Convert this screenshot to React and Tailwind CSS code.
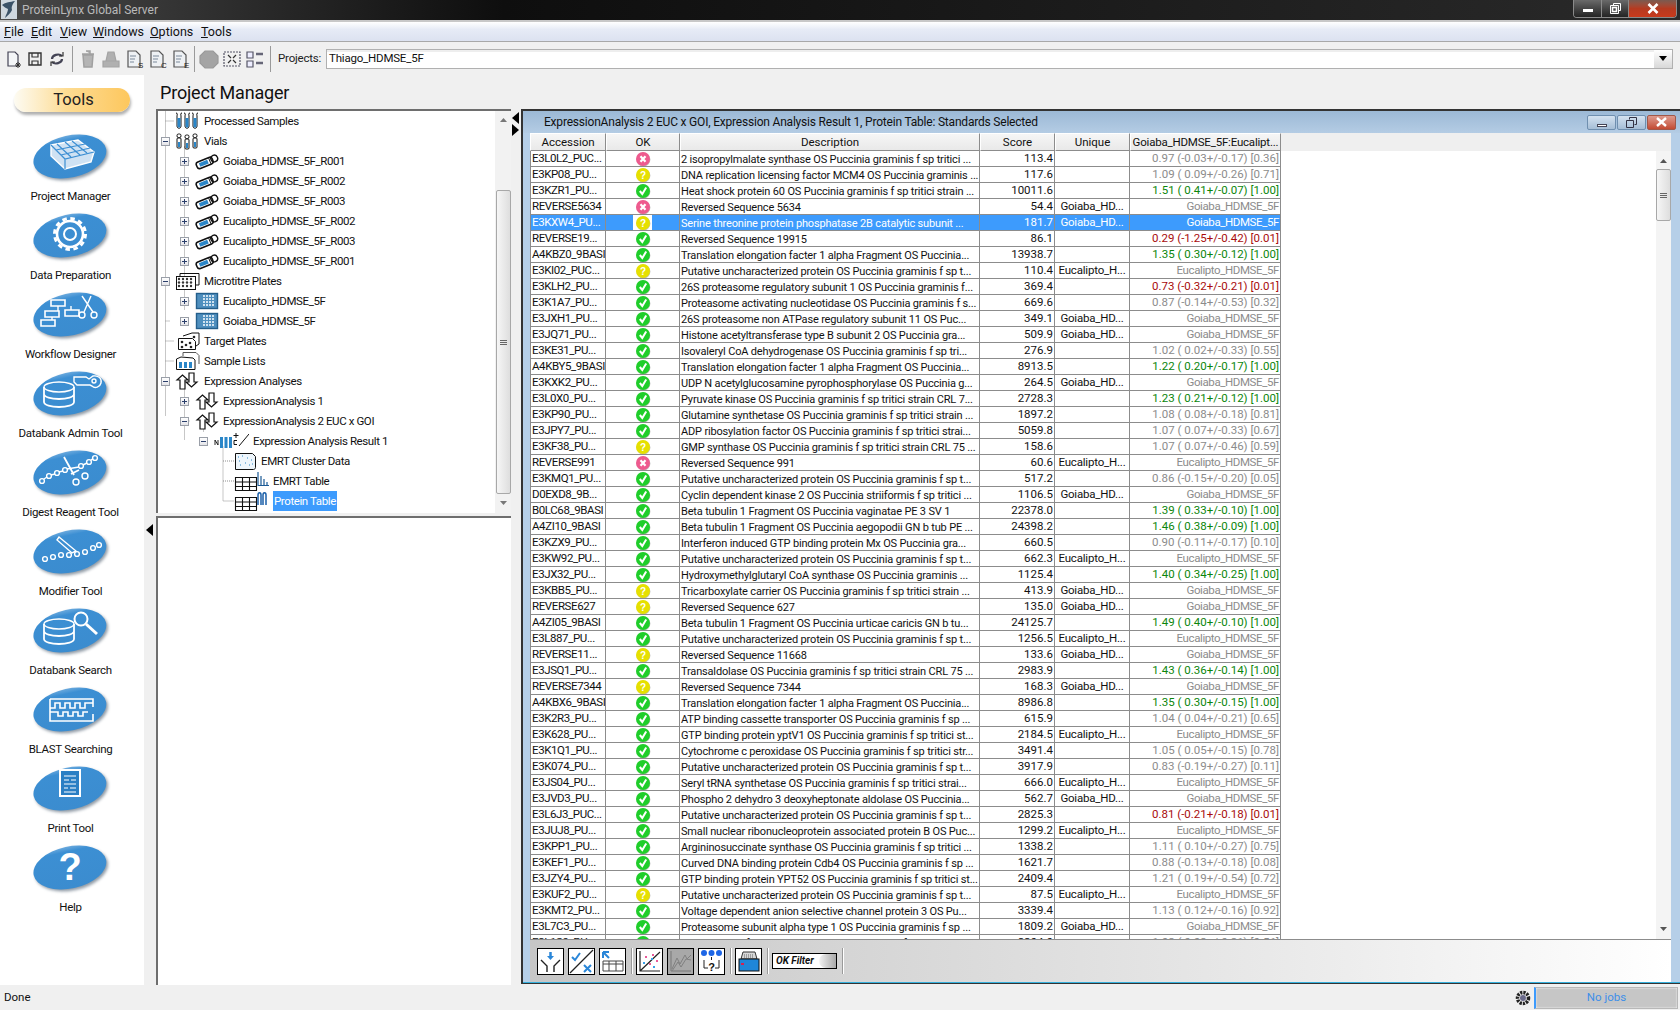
import React from "react";

const ROWS = [
  ["E3L0L2_PUC...", "x", "2 isopropylmalate synthase OS Puccinia graminis f sp tritici ...", "113.4", "", "0.97 (-0.03+/-0.17) [0.36]", "g"],
  ["E3KP08_PU...", "q", "DNA replication licensing factor MCM4 OS Puccinia graminis ...", "117.6", "", "1.09 ( 0.09+/-0.26) [0.71]", "g"],
  ["E3KZR1_PU...", "c", "Heat shock protein 60 OS Puccinia graminis f sp tritici strain ...", "10011.6", "", "1.51 ( 0.41+/-0.07) [1.00]", "v"],
  ["REVERSE5634", "x", "Reversed Sequence 5634", "54.4", "Goiaba_HD...", "Goiaba_HDMSE_5F", "g"],
  ["E3KXW4_PU...", "q", "Serine threonine protein phosphatase 2B catalytic subunit ...", "181.7", "Goiaba_HD...", "Goiaba_HDMSE_5F", "s"],
  ["REVERSE19...", "c", "Reversed Sequence 19915", "86.1", "", "0.29 (-1.25+/-0.42) [0.01]", "r"],
  ["A4KBZ0_9BASI", "c", "Translation elongation facter 1 alpha Fragment OS Puccinia...", "13938.7", "", "1.35 ( 0.30+/-0.12) [1.00]", "v"],
  ["E3KI02_PUC...", "q", "Putative uncharacterized protein OS Puccinia graminis f sp t...", "110.4", "Eucalipto_H...", "Eucalipto_HDMSE_5F", "g"],
  ["E3KLH2_PU...", "c", "26S proteasome regulatory subunit 1 OS Puccinia graminis f...", "369.4", "", "0.73 (-0.32+/-0.21) [0.01]", "r"],
  ["E3K1A7_PU...", "c", "Proteasome activating nucleotidase OS Puccinia graminis f s...", "669.6", "", "0.87 (-0.14+/-0.53) [0.32]", "g"],
  ["E3JXH1_PU...", "c", "26S proteasome non ATPase regulatory subunit 11 OS Puc...", "349.1", "Goiaba_HD...", "Goiaba_HDMSE_5F", "g"],
  ["E3JQ71_PU...", "c", "Histone acetyltransferase type B subunit 2 OS Puccinia gra...", "509.9", "Goiaba_HD...", "Goiaba_HDMSE_5F", "g"],
  ["E3KE31_PU...", "c", "Isovaleryl CoA dehydrogenase OS Puccinia graminis f sp tri...", "276.9", "", "1.02 ( 0.02+/-0.33) [0.55]", "g"],
  ["A4KBY5_9BASI", "c", "Translation elongation facter 1 alpha Fragment OS Puccinia...", "8913.5", "", "1.22 ( 0.20+/-0.17) [1.00]", "v"],
  ["E3KXK2_PU...", "c", "UDP N acetylglucosamine pyrophosphorylase OS Puccinia g...", "264.5", "Goiaba_HD...", "Goiaba_HDMSE_5F", "g"],
  ["E3L0X0_PU...", "c", "Pyruvate kinase OS Puccinia graminis f sp tritici strain CRL 7...", "2728.3", "", "1.23 ( 0.21+/-0.12) [1.00]", "v"],
  ["E3KP90_PU...", "c", "Glutamine synthetase OS Puccinia graminis f sp tritici strain ...", "1897.2", "", "1.08 ( 0.08+/-0.18) [0.81]", "g"],
  ["E3JPY7_PU...", "c", "ADP ribosylation factor OS Puccinia graminis f sp tritici strai...", "5059.8", "", "1.07 ( 0.07+/-0.33) [0.67]", "g"],
  ["E3KF38_PU...", "q", "GMP synthase OS Puccinia graminis f sp tritici strain CRL 75 ...", "158.6", "", "1.07 ( 0.07+/-0.46) [0.59]", "g"],
  ["REVERSE991", "x", "Reversed Sequence 991", "60.6", "Eucalipto_H...", "Eucalipto_HDMSE_5F", "g"],
  ["E3KMQ1_PU...", "c", "Putative uncharacterized protein OS Puccinia graminis f sp t...", "517.2", "", "0.86 (-0.15+/-0.20) [0.05]", "g"],
  ["D0EXD8_9B...", "c", "Cyclin dependent kinase 2 OS Puccinia striiformis f sp tritici ...", "1106.5", "Goiaba_HD...", "Goiaba_HDMSE_5F", "g"],
  ["B0LC68_9BASI", "c", "Beta tubulin 1 Fragment OS Puccinia vaginatae PE 3 SV 1", "22378.0", "", "1.39 ( 0.33+/-0.10) [1.00]", "v"],
  ["A4ZI10_9BASI", "c", "Beta tubulin 1 Fragment OS Puccinia aegopodii GN b tub PE ...", "24398.2", "", "1.46 ( 0.38+/-0.09) [1.00]", "v"],
  ["E3KZX9_PU...", "c", "Interferon induced GTP binding protein Mx OS Puccinia gra...", "660.5", "", "0.90 (-0.11+/-0.17) [0.10]", "g"],
  ["E3KW92_PU...", "c", "Putative uncharacterized protein OS Puccinia graminis f sp t...", "662.3", "Eucalipto_H...", "Eucalipto_HDMSE_5F", "g"],
  ["E3JX32_PU...", "c", "Hydroxymethylglutaryl CoA synthase OS Puccinia graminis ...", "1125.4", "", "1.40 ( 0.34+/-0.25) [1.00]", "v"],
  ["E3KBB5_PU...", "q", "Tricarboxylate carrier OS Puccinia graminis f sp tritici strain ...", "413.9", "Goiaba_HD...", "Goiaba_HDMSE_5F", "g"],
  ["REVERSE627", "q", "Reversed Sequence 627", "135.0", "Goiaba_HD...", "Goiaba_HDMSE_5F", "g"],
  ["A4ZI05_9BASI", "c", "Beta tubulin 1 Fragment OS Puccinia urticae caricis GN b tu...", "24125.7", "", "1.49 ( 0.40+/-0.10) [1.00]", "v"],
  ["E3L887_PU...", "c", "Putative uncharacterized protein OS Puccinia graminis f sp t...", "1256.5", "Eucalipto_H...", "Eucalipto_HDMSE_5F", "g"],
  ["REVERSE11...", "q", "Reversed Sequence 11668", "133.6", "Goiaba_HD...", "Goiaba_HDMSE_5F", "g"],
  ["E3JSQ1_PU...", "c", "Transaldolase OS Puccinia graminis f sp tritici strain CRL 75 ...", "2983.9", "", "1.43 ( 0.36+/-0.14) [1.00]", "v"],
  ["REVERSE7344", "q", "Reversed Sequence 7344", "168.3", "Goiaba_HD...", "Goiaba_HDMSE_5F", "g"],
  ["A4KBX6_9BASI", "c", "Translation elongation facter 1 alpha Fragment OS Puccinia...", "8986.8", "", "1.35 ( 0.30+/-0.15) [1.00]", "v"],
  ["E3K2R3_PU...", "c", "ATP binding cassette transporter OS Puccinia graminis f sp ...", "615.9", "", "1.04 ( 0.04+/-0.21) [0.65]", "g"],
  ["E3K628_PU...", "c", "GTP binding protein yptV1 OS Puccinia graminis f sp tritici st...", "2184.5", "Eucalipto_H...", "Eucalipto_HDMSE_5F", "g"],
  ["E3K1Q1_PU...", "c", "Cytochrome c peroxidase OS Puccinia graminis f sp tritici str...", "3491.4", "", "1.05 ( 0.05+/-0.15) [0.78]", "g"],
  ["E3K074_PU...", "c", "Putative uncharacterized protein OS Puccinia graminis f sp t...", "3917.9", "", "0.83 (-0.19+/-0.27) [0.11]", "g"],
  ["E3JS04_PU...", "c", "Seryl tRNA synthetase OS Puccinia graminis f sp tritici strai...", "666.0", "Eucalipto_H...", "Eucalipto_HDMSE_5F", "g"],
  ["E3JVD3_PU...", "c", "Phospho 2 dehydro 3 deoxyheptonate aldolase OS Puccinia...", "562.7", "Goiaba_HD...", "Goiaba_HDMSE_5F", "g"],
  ["E3L6J3_PUC...", "c", "Putative uncharacterized protein OS Puccinia graminis f sp t...", "2825.3", "", "0.81 (-0.21+/-0.18) [0.01]", "r"],
  ["E3JUJ8_PU...", "c", "Small nuclear ribonucleoprotein associated protein B OS Puc...", "1299.2", "Eucalipto_H...", "Eucalipto_HDMSE_5F", "g"],
  ["E3KPP1_PU...", "c", "Argininosuccinate synthase OS Puccinia graminis f sp tritici ...", "1338.2", "", "1.11 ( 0.10+/-0.27) [0.75]", "g"],
  ["E3KEF1_PU...", "c", "Curved DNA binding protein Cdb4 OS Puccinia graminis f sp ...", "1621.7", "", "0.88 (-0.13+/-0.18) [0.08]", "g"],
  ["E3JZY4_PU...", "c", "GTP binding protein YPT52 OS Puccinia graminis f sp tritici st...", "2409.4", "", "1.21 ( 0.19+/-0.54) [0.72]", "g"],
  ["E3KUF2_PU...", "q", "Putative uncharacterized protein OS Puccinia graminis f sp t...", "87.5", "Eucalipto_H...", "Eucalipto_HDMSE_5F", "g"],
  ["E3KMT2_PU...", "c", "Voltage dependent anion selective channel protein 3 OS Pu...", "3339.4", "", "1.13 ( 0.12+/-0.16) [0.92]", "g"],
  ["E3L7C3_PU...", "c", "Proteasome subunit alpha type 1 OS Puccinia graminis f sp ...", "1809.2", "Goiaba_HD...", "Goiaba_HDMSE_5F", "g"],
  ["E3L1S9_PU...", "c", "Glucosamine fructose 6 phosphate aminotransferase 3 OS ...", "2204.0", "", "1.02 ( 0.03+/-0.31) [0.56]", "g"],
];

const RATIO_COLOR = { g: "text-[#8c8c8c]", v: "text-[#0b860b]", r: "text-[#a80c0c]", s: "text-white" };

// ---- small status dots in the OK column
const StatusDot = ({ kind }) => {
  const fill = { x: "#ee5a8e", q: "#e6e000", c: "#1fce2a" }[kind];
  return (
    <svg width="16" height="16" viewBox="0 0 16 16">
      <circle cx="8.4" cy="8.6" r="7" fill="#9a9a9a" opacity="0.6" />
      <circle cx="8" cy="8" r="7" fill={fill} />
      {kind === "x" && <path d="M5.5 5.2 10.5 10.8M10.5 5.2 5.5 10.8" stroke="#fff" strokeWidth="2.2" />}
      {kind === "c" && <path d="M4.8 8 7.3 11 11.2 4.6" stroke="#fff" strokeWidth="2" fill="none" />}
      {kind === "q" && (
        <text x="8" y="11.5" textAnchor="middle" fontSize="10" fontWeight="700" fill="#fff" fontFamily="Liberation Sans, sans-serif">?</text>
      )}
    </svg>
  );
};

// ---- sidebar tool icons, white line art on a tilted blue oval
const Oval = ({ children }) => (
  <svg width="80" height="52" viewBox="0 0 80 52" className="ml-[33px]">
    <defs>
      <filter id="ovalBlur"><feGaussianBlur stdDeviation="1.4" /></filter>
      <linearGradient id="ovalFill" x1="0" y1="0" x2="0" y2="1">
        <stop offset="0" stopColor="#6aa9dd" />
        <stop offset="0.12" stopColor="#3c8fd3" />
        <stop offset="1" stopColor="#3b8ccf" />
      </linearGradient>
    </defs>
    <ellipse cx="38.5" cy="25.5" rx="37" ry="21" transform="rotate(-12 38 25)" fill="#8f9aa5" filter="url(#ovalBlur)" />
    <ellipse cx="37" cy="23.5" rx="37" ry="21" transform="rotate(-12 37 24)" fill="url(#ovalFill)" />
    <g fill="none" stroke="#fff" strokeWidth="1.4">{children}</g>
  </svg>
);

const Chain = ({ pts }) => (
  <>
    {pts.map(([x, y], i) => (
      <circle key={i} cx={x} cy={y} r="2.4" />
    ))}
  </>
);

const Cylinder = () => (
  <>
    <ellipse cx="26" cy="17" rx="15" ry="5" />
    <path d="M11 17v15c0 3 7 5 15 5s15-2 15-5V17M11 24c0 3 7 5 15 5s15-2 15-5" strokeWidth="1.8" />
  </>
);

const Scissors = ({ x = 0, y = 0 }) => (
  <g transform={`translate(${x} ${y})`}>
    <path d="M0 0 11 16M9 0 2 16" />
    <circle cx="0" cy="19" r="3" />
    <circle cx="12" cy="19" r="3" />
  </g>
);

const TOOLS = [
  ["Project Manager", (
    <>
      <path d="M18 12 45 7 61 19 58 29 32 36 18 23Z" fill="#cfe2f3" />
      <path d="M18 12 32 26 61 19M32 26v10M24 11l14 13M32 9l15 13M39 8l15 12M23 17l29-6M28 22l29-7" stroke="#3c8fd3" strokeWidth="1.2" />
    </>
  )],
  ["Data Preparation", (
    <>
      <circle cx="37" cy="22" r="6" strokeWidth="2" />
      <circle cx="37" cy="22" r="13" strokeWidth="2.6" />
      <circle cx="37" cy="22" r="15.5" strokeWidth="3" strokeDasharray="4.5 3.6" />
    </>
  )],
  ["Workflow Designer", (
    <>
      <path d="M18 9h14v6H18ZM12 20h14v6H12ZM32 19h14v6H32ZM8 29h14v6H8Z" strokeWidth="1.6" />
      <path d="M25 15v5M19 26v3M38 15v4" />
      <Scissors x={49} y={5} />
    </>
  )],
  ["Databank Admin Tool", (
    <>
      <Cylinder />
      <path d="M41 7h12l3 2 4-3c6-1 9 3 8 7-1 4-6 6-9 3l-2-1H44l-3-3Z" />
      <circle cx="61" cy="11" r="2" />
    </>
  )],
  ["Digest Reagent Tool", (
    <>
      <Chain pts={[[9, 32], [16, 27], [24, 24], [32, 21], [48, 17], [56, 13], [62, 9]]} />
      <path d="M11 30 14 28M18 26l4-1M26 23l4-1M50 16l4-2M58 11l2-1M34 20l12-2" />
      <path d="M31 8 41 26M46 21 38 25" strokeWidth="1.8" />
      <circle cx="43" cy="33" r="3" />
      <circle cx="52" cy="27" r="3" />
    </>
  )],
  ["Modifier Tool", (
    <>
      <Chain pts={[[12, 31], [20, 29], [28, 27], [36, 27], [44, 26], [52, 24], [60, 20], [66, 17]]} />
      <path d="M26 9 43 23 39 25 24 12Z" />
    </>
  )],
  ["Databank Search", (
    <>
      <Cylinder />
      <circle cx="48" cy="12" r="6.5" strokeWidth="2" />
      <path d="M53 17 64 27" strokeWidth="3" />
    </>
  )],
  ["BLAST Searching", (
    <>
      <path d="M17 13h43v8M17 13v22h43v-7" strokeWidth="1.6" />
      <path d="M17 22h5v-5h5v5h5v-5h5v5h5v-5h5v5h5v-5h8M17 26h8v4h5v-4h5v4h5v-4h5v4h5v-4h5" strokeWidth="1.6" />
    </>
  )],
  ["Print Tool", (
    <>
      <rect x="27" y="5" width="20" height="26" fill="#2b7fc4" stroke="#fff" strokeWidth="2" />
      <path d="M31 11h12M31 15h5M38 15h5M31 19h12M31 23h4M37 23h6M31 27h12" strokeWidth="1.2" />
    </>
  )],
  ["Help", (
    <text x="37" y="36" textAnchor="middle" fontSize="38" fontWeight="700" fill="#fff" stroke="none" fontFamily="Liberation Sans, sans-serif">?</text>
  )],
];

// ---- tree icons
const TreeSvg = ({ w, children }) => (
  <svg width={w} height="20" viewBox={`0 0 ${w} 20`} className="shrink-0" fill="none" stroke="#111" strokeWidth="1">
    {children}
  </svg>
);

const Tube = ({ x }) => (
  <>
    <path d={`M${x} 2c2 0 1 2 1 3v10c0 3 4 3 4 0V5c0-1-1-3 1-3`} />
    <path d={`M${x + 1.5} 7h3v8c0 2-3 2-3 0Z`} fill="#2a86c8" stroke="none" />
  </>
);

const Vial = ({ x, y = 3 }) => (
  <>
    <rect x={x} y={y} width="4" height="3.5" rx="1.5" />
    <rect x={x} y={y + 4} width="4" height="10" rx="1" />
    <rect x={x + 1} y={y + 8} width="2" height="5" fill="#2a86c8" stroke="none" />
  </>
);

const VialFlat = () => (
  <TreeSvg w={24}>
    <g transform="rotate(-22 12 11)">
      <rect x="1" y="7.5" width="17" height="7" rx="2.5" strokeWidth="1.6" />
      <rect x="4" y="9" width="9" height="4" fill="#2a86c8" stroke="none" />
      <circle cx="20" cy="10.5" r="3.4" strokeWidth="1.4" />
      <path d="M15 8v6" />
    </g>
  </TreeSvg>
);

const BluePlate = () => (
  <TreeSvg w={24}>
    <rect x="1.5" y="2.5" width="21" height="15" fill="#4f8fbe" stroke="#245f8c" strokeWidth="1.4" />
    <g fill="#cfe2f0" stroke="none">
      {[5, 8, 11, 14].map((y) =>
        [9, 12, 15, 18].map((x) => <rect key={`${x}${y}`} x={x - 1} y={y - 1} width="2" height="2" />)
      )}
    </g>
  </TreeSvg>
);

const Arrows = ({ w }) => (
  <TreeSvg w={w}>
    <path d="M5 18V9H2l5.500-5L13 9h-3v9Z" fill="#fff" strokeWidth="1.2" />
    <path d="M15 2v9h-3l5.500 5L23 11h-3V2Z" fill="#fff" strokeWidth="1.2" transform="translate(-1 0)" />
  </TreeSvg>
);

const TableGrid = ({ w, children }) => (
  <TreeSvg w={w}>
    <path d="M1.500 6.500h21v13h-21ZM1.500 11h21M1.500 15.500h21M8.500 6.500v13M15.500 6.500v13" strokeWidth="1.1" />
    {children}
  </TreeSvg>
);

const TREE = [
  { pad: "pl-[17px]", text: "Processed Samples", icon: <TreeSvg w={25}><Tube x={1} /><Tube x={9} /><Tube x={17} /></TreeSvg>, gapClass: "ml-0" },
  { pad: "pl-[3px]", exp: "-", text: "Vials", icon: <TreeSvg w={25}><Vial x={2} /><Vial x={10} y={4} /><Vial x={18} /></TreeSvg>, gapClass: "ml-[5px]" },
  ...["Goiaba_HDMSE_5F_R001", "Goiaba_HDMSE_5F_R002", "Goiaba_HDMSE_5F_R003", "Eucalipto_HDMSE_5F_R002", "Eucalipto_HDMSE_5F_R003", "Eucalipto_HDMSE_5F_R001"].map((text) => ({
    pad: "pl-[22px]", exp: "+", text, icon: <VialFlat />, gapClass: "ml-[6px]",
  })),
  {
    pad: "pl-[3px]", exp: "-", text: "Microtitre Plates", gapClass: "ml-[5px]",
    icon: (
      <TreeSvg w={25}>
        <path d="M5 5V2.500h19V14h-4" />
        <rect x="1.500" y="5.500" width="19" height="13" fill="#fff" />
        <g fill="#333" stroke="none">
          {[8, 11.5, 15].map((y) => [4, 8, 12, 16].map((x) => <circle key={`${x}${y}`} cx={x} cy={y} r="1.2" />))}
        </g>
      </TreeSvg>
    ),
  },
  { pad: "pl-[22px]", exp: "+", text: "Eucalipto_HDMSE_5F", icon: <BluePlate />, gapClass: "ml-[6px]" },
  { pad: "pl-[22px]", exp: "+", text: "Goiaba_HDMSE_5F", icon: <BluePlate />, gapClass: "ml-[6px]" },
  {
    pad: "pl-[19px]", text: "Target Plates", gapClass: "ml-0",
    icon: (
      <TreeSvg w={23}>
        <path d="M6 5 15 2h7v11l-3 2" />
        <path d="M1.500 7.500h14l3 3v8h-17Z" fill="#fff" />
        <g fill="#222" stroke="none">
          <circle cx="5" cy="11" r="1.3" /><circle cx="9" cy="14" r="1.3" /><circle cx="5" cy="16" r="1.3" /><circle cx="13" cy="12" r="1.3" /><circle cx="14" cy="16" r="1.3" /><circle cx="17" cy="6" r="1.3" />
        </g>
      </TreeSvg>
    ),
  },
  {
    pad: "pl-[17px]", text: "Sample Lists", gapClass: "ml-0",
    icon: (
      <TreeSvg w={25}>
        <path d="M8 5V1.500h13l3 3V13" stroke="#555" />
        <path d="M1.500 8 6 6l12 1 2 2v9.500H1.500Z" fill="#fff" />
        <rect x="4" y="11" width="3" height="6" fill="#2a86c8" stroke="none" />
        <rect x="9" y="11" width="3" height="6" fill="#2a86c8" stroke="none" />
        <rect x="14" y="11" width="3" height="6" fill="#2a86c8" stroke="none" />
      </TreeSvg>
    ),
  },
  { pad: "pl-[3px]", exp: "-", text: "Expression Analyses", icon: <Arrows w={25} />, gapClass: "ml-[5px]" },
  { pad: "pl-[22px]", exp: "+", text: "ExpressionAnalysis 1", icon: <Arrows w={24} />, gapClass: "ml-[6px]" },
  { pad: "pl-[22px]", exp: "-", text: "ExpressionAnalysis 2 EUC x GOI", icon: <Arrows w={24} />, gapClass: "ml-[6px]" },
  {
    pad: "pl-[41px]", exp: "-", text: "Expression Analysis Result 1", gapClass: "ml-[5px]",
    icon: (
      <TreeSvg w={36}>
        <path d="M2 14V9l3 5V9" strokeWidth="0.9" />
        <g fill="#2a86c8" stroke="none">
          <rect x="7" y="6" width="3" height="11" /><rect x="11.500" y="6" width="3" height="11" /><rect x="16" y="6" width="3" height="11" />
        </g>
        <path d="M23 2v5M20.500 4.500h5M26 15 36 3M24 13.500h-3v-4h3" strokeWidth="1" />
      </TreeSvg>
    ),
  },
  {
    pad: "pl-[76px]", text: "EMRT Cluster Data", gapClass: "ml-0",
    icon: (
      <TreeSvg w={23}>
        <path d="M1.500 2.500h17l3 3v11c0 1-1 2-2 2h-18Z" fill="#eef6fc" />
        <path d="M4 6h1M8 5h1M5 10h1M13 7h1M17 9h1M11 12h1M15 14h1M6 14h1M18 13h1" stroke="#2a86c8" strokeWidth="1.2" />
      </TreeSvg>
    ),
  },
  {
    pad: "pl-[76px]", text: "EMRT Table", gapClass: "ml-0",
    icon: <TableGrid w={35}><path d="M24 1v13M27 5v9M30 8v6M33 11v3M23.500 14.500H35" stroke="#1b5a96" strokeWidth="1.2" /></TableGrid>,
  },
  {
    pad: "pl-[76px]", text: "Protein Table", sel: true, gapClass: "ml-0",
    icon: <TableGrid w={35}><path d="M24 14V4c0-3 3-3 3 0v10M29 14V4c0-3 3-3 3 0v10" stroke="#1b5fa8" strokeWidth="1.5" /></TableGrid>,
  },
];

const Expander = ({ sign }) => (
  <span className="relative z-10 flex h-[9px] w-[9px] shrink-0 items-center justify-center border border-[#9a9fa8] bg-gradient-to-b from-white to-[#e4e4e8]">
    <svg width="7" height="7" viewBox="0 0 7 7">
      <path d={sign === "+" ? "M1 3.500h5M3.500 1v5" : "M1 3.500h5"} stroke="#2b3f6b" strokeWidth="1" />
    </svg>
  </span>
);

// dotted connector lines of the tree, drawn over the rows
const TreeLines = () => (
  <svg className="pointer-events-none absolute left-0 top-0" width="130" height="400" fill="none" stroke="#8f8f8f" strokeDasharray="1 1">
    <path d="M7.500 0V305M7.500 10.500H16M7.500 30.500H12M7.500 210.500H12M7.500 230.500H16M7.500 250.500H16M7.500 270.500H12" transform="translate(0 -0.5)" />
    <path d="M26.500 36V200M26.500 50.500H32M26.500 70.500H32M26.500 90.500H32M26.500 110.500H32M26.500 130.500H32M26.500 150.500H32M26.500 170.500H32M26.500 190.500H32" transform="translate(0 -0.5)" />
    <path d="M26.500 276V330M26.500 290.500H32M26.500 310.500H32" transform="translate(0 -0.5)" />
    <path d="M45.500 316V322M45.500 330.500H50M65 336V390.500H76M65 350.500H76M65 370.500H76" transform="translate(0 -0.5)" />
  </svg>
);

// ---- toolbar glyphs
const Bar = ({ children, w = 22 }) => (
  <svg width={w} height="22" viewBox={`0 0 ${w} 22`} fill="none" stroke="#333" strokeWidth="1.2" className="shrink-0">
    {children}
  </svg>
);

const Doc = ({ letter, color = "#555" }) => (
  <Bar>
    <path d="M5 3h8l4 4v12H5Z" stroke={color} fill="#eef1f4" />
    <path d="M7 8h6M7 11h5M7 14h4" stroke="#7a8a9a" />
    <text x="15" y="20" fontSize="8" fontFamily="Liberation Sans, sans-serif" fill="#222" stroke="none">{letter}</text>
  </Bar>
);

const Sep = () => <div className="ml-[5px] mr-[4px] h-[26px] w-px shrink-0 bg-[#9a9a9a] shadow-[1px_0_0_#fff]" />;

const TbBtn = ({ children, dim }) => (
  <div className={`flex h-[27px] w-[27px] shrink-0 items-center justify-center border border-black ${dim ? "border-[#8a8a8a] bg-[#a8a8a8]" : "bg-white"}`}>
    <svg width="25" height="25" viewBox="0 0 25 25" fill="none" stroke="#222" strokeWidth="1">{children}</svg>
  </div>
);

const Cell = ({ className = "", children }) => (
  <div className={`flex h-full shrink-0 items-center overflow-hidden whitespace-pre border-r border-[#8c8c8c] pt-px ${className}`}>{children}</div>
);

const Head = ({ className = "", children }) => (
  <div className={`flex h-full shrink-0 items-center justify-center overflow-hidden whitespace-pre border border-[#8c8c8c] border-l-white border-t-white bg-gradient-to-b from-[#f6f6f6] to-[#e9e9e9] pt-px ${className}`}>{children}</div>
);

const Arrow = ({ dir }) => (
  <svg width="9" height="12" viewBox="0 0 9 12">
    <path d={dir === "l" ? "M8 0v12L1 6Z" : "M1 0v12l7-6Z"} fill="#000" />
  </svg>
);

const WinBtn = ({ className = "", children }) => (
  <div className={`flex h-[15px] w-[29px] items-center justify-center rounded-[2px] border ${className}`}>{children}</div>
);

const App = () => {
  return (
    <div className="flex h-[1010px] w-[1680px] flex-col overflow-hidden bg-[#f0f0f0] font-['Roboto',sans-serif] text-[11.5px] leading-none text-[#111]">
      {/* window title bar */}
      <div className="relative flex h-[20px] shrink-0 items-center bg-gradient-to-r from-[#4a4a4a] via-[#0e0e0e] via-30% to-[#2a2a2a]">
        <svg width="17" height="20" viewBox="0 0 17 20" className="ml-[1px] shrink-0">
          <rect width="16" height="19" fill="#cfd8e0" />
          <path d="M1 5c4-3 8-3 13-4-2 3-4 5-3 9-1 3-4 5-7 8 1-4 3-6 3-9C5 8 3 7 1 5Z" fill="#3a5268" />
        </svg>
        <span className="ml-[4px] text-[12px] text-[#b9b9b9]">ProteinLynx Global Server</span>
        <div className="ml-auto mr-[3px] flex h-[18px] self-start overflow-hidden rounded-b-[4px] border border-t-0 border-[#8a8a8a]">
          <div className="flex w-[28px] items-center justify-center border-r border-[#8a8a8a] bg-gradient-to-b from-[#6a6a6a] to-[#242424]">
            <span className="mt-[3px] h-[3px] w-[10px] bg-white" />
          </div>
          <div className="flex w-[27px] items-center justify-center border-r border-[#8a8a8a] bg-gradient-to-b from-[#6a6a6a] to-[#242424]">
            <svg width="11" height="11" viewBox="0 0 11 11" fill="none" stroke="#fff"><path d="M3.500 2.500V.5h7v7h-2M.5 2.500h8v8h-8Z" /><rect x="2.500" y="4.500" width="4" height="4" strokeWidth="1.6" /></svg>
          </div>
          <div className="flex w-[47px] items-center justify-center bg-gradient-to-b from-[#7a5a50] via-[#b53a20] to-[#c83a1c]">
            <svg width="12" height="11" viewBox="0 0 12 11"><path d="M1.500 1 10.500 10M10.500 1 1.500 10" stroke="#fff" strokeWidth="2.6" /></svg>
          </div>
        </div>
      </div>
      <div className="h-[2px] shrink-0 bg-[#c8c8c8]" />
      {/* menu */}
      <div className="flex h-[20px] shrink-0 items-center border-b border-[#a8a8a8] bg-gradient-to-b from-white via-[#e6ebf6] via-40% to-[#dce2f0] pl-[4px] pt-px text-[12.5px]">
        {[["F", "ile", "w-[27px]"], ["E", "dit", "w-[29px]"], ["V", "iew", "w-[33px]"], ["W", "indows", "w-[57px]"], ["O", "ptions", "w-[51px]"], ["T", "ools", "w-[40px]"]].map(([u, rest, w]) => (
          <span key={u} className={w}><u>{u}</u>{rest}</span>
        ))}
      </div>
      {/* toolbar */}
      <div className="flex h-[33px] shrink-0 items-center pl-[2px]">
        <Bar><path d="M6 4h7l3 3v11H6Z" stroke="#445" fill="#f4f6f8" /><path d="M16 14v6M13 17h6M14 15l4 4M18 15l-4 4" strokeWidth="1" /></Bar>
        <Bar><path d="M5 5h12v12H5Z" strokeWidth="1.400" /><path d="M8 5v4h6V5M8 17v-4h6v4" /></Bar>
        <Bar><path d="M6 11c0-4 7-6 10-3M16 11c0 4-7 6-10 3" strokeWidth="2.200" stroke="#445" /><path d="M13 8h4V4M9 14H5v4" /></Bar>
        <div className="mx-[4px] h-[26px] w-px bg-[#9a9a9a]" />
        <div className="flex items-center gap-[1px]">
          <Bar><path d="M5 6h12M9 3h4v3M6 7l1 12h8l1-12Z" stroke="#a0a0a0" fill="#b4b4b4" strokeWidth="1.500" /></Bar>
          <Bar><path d="M3 13h16v6H3ZM6 13l2-9h6l2 9Z" fill="#b0b0b0" stroke="#a4a4a4" /></Bar>
          <Doc letter="S" />
          <Doc letter="C" />
          <Doc letter="E" />
        </div>
        <div className="mx-[3px] h-[26px] w-px bg-[#9a9a9a]" />
        <div className="flex items-center gap-[1px]">
          <Bar><path d="M7 3h8l5 5v7l-5 5H7l-5-5V8Z" fill="#a4a4a4" stroke="#9a9a9a" /></Bar>
          <Bar><rect x="3" y="4" width="16" height="14" stroke="#556" strokeDasharray="2 1" /><path d="M7 7l3 3M15 7l-3 3M7 15l3-3M15 15l-3-3" /></Bar>
          <Bar><path d="M3 4h6v6H3ZM3 13h6v6H3Z" stroke="#556" fill="#eef" /><path d="M12 6h7M12 15h7" strokeWidth="2.400" stroke="#667" /></Bar>
        </div>
        <div className="mx-[4px] h-[26px] w-px bg-[#9a9a9a]" />
        <span className="ml-[3px] w-[48px] text-[11.5px] tracking-[-0.2px] text-[#222]">Projects:</span>
        <div className="mr-[7px] flex h-[20px] flex-1 items-center border border-[#b0b0b0] bg-white pl-[2px] text-[11.5px] tracking-[-0.2px] shadow-[inset_0_2px_0_#eee]">
          Thiago_HDMSE_5F
          <div className="ml-auto flex h-full w-[18px] items-center justify-center bg-gradient-to-b from-white to-[#d8d8d8]">
            <svg width="8" height="5" viewBox="0 0 8 5"><path d="M0 0h8L4 5Z" fill="#000" /></svg>
          </div>
        </div>
      </div>

      {/* body */}
      <div className="flex min-h-0 flex-1">
        {/* tools column */}
        <div className="flex w-[144px] shrink-0 flex-col bg-white pt-[13px]">
          <div className="ml-[14px] flex h-[24px] w-[116px] items-center justify-center rounded-full bg-gradient-to-r from-[#fdfbf2] via-[#fddc93] via-45% to-[#fdc75c] pl-[3px] pt-px text-[16.5px] text-[#222] shadow-[1px_3px_3px_#b0b0b0]">
            Tools
          </div>
          <div className="mt-[21px] flex flex-col">
            {TOOLS.map(([label, art]) => (
              <div key={label} className="flex h-[79px] w-[141px] flex-col">
                <Oval>{art}</Oval>
                <span className="mt-[4px] text-center leading-[14px] tracking-[-0.3px]">{label}</span>
              </div>
            ))}
          </div>
        </div>

        <div className="flex w-[12px] shrink-0 flex-col pl-[1px] pt-[449px]"><Arrow dir="l" /></div>

        {/* project tree */}
        <div className="flex w-[355px] shrink-0 flex-col">
          <div className="flex h-[34px] shrink-0 items-center pl-[4px] pt-[2px] text-[18px] tracking-[-0.2px]">Project Manager</div>
          <div className="flex h-[404px] shrink-0 border-l-2 border-t-2 border-[#6e6e6e] bg-white">
            <div className="relative flex-1 overflow-hidden">
              <TreeLines />
              {TREE.map((r) => (
                <div key={r.text} className={`relative flex h-[20px] items-center ${r.pad}`}>
                  {r.exp && <Expander sign={r.exp} />}
                  <span className={`${r.gapClass} flex shrink-0`}>{r.icon}</span>
                  <span className={`ml-[4px] flex h-[20px] items-center whitespace-pre pt-px tracking-[-0.4px] ${r.sel ? "bg-[#3d9bfd] px-[1px] text-white" : ""}`}>{r.text}</span>
                </div>
              ))}
            </div>
            <div className="flex w-[16px] shrink-0 flex-col items-center bg-[#f2f2f2] pb-[8px] pt-[7px]">
              <svg width="7" height="4" viewBox="0 0 7 4"><path d="M3.500 0 7 4H0Z" fill="#777" /></svg>
              <div className="mt-[68px] flex h-[304px] w-[15px] items-center justify-center rounded-[2px] border border-[#a8a8a8] bg-gradient-to-r from-[#f6f6f6] to-[#dedede]">
                <div className="flex w-[7px] flex-col gap-[1px]"><span className="h-px bg-[#666]" /><span className="h-px bg-[#666]" /><span className="h-px bg-[#666]" /></div>
              </div>
              <svg width="7" height="4" viewBox="0 0 7 4" className="mt-auto"><path d="M0 0h7L3.500 4Z" fill="#777" /></svg>
            </div>
          </div>
          <div className="mt-[3px] flex-1 border-l-2 border-t-2 border-[#6e6e6e] bg-white" />
        </div>

        <div className="flex w-[10px] shrink-0 flex-col pt-[37px]">
          <Arrow dir="l" />
          <Arrow dir="r" />
        </div>

        {/* result window */}
        <div className="mb-[1px] mt-[34px] flex flex-1 flex-col border-b border-l-2 border-t-2 border-[#333] bg-[#b6cfe8]">
          <div className="flex h-[22px] shrink-0 items-center bg-gradient-to-b from-[#9cb9d6] to-[#b4cce4] pl-[21px] text-[12px] tracking-[-0.2px]">
            ExpressionAnalysis 2 EUC x GOI, Expression Analysis Result 1, Protein Table: Standards Selected
            <div className="ml-auto mr-[4px] flex gap-[1px]">
              <WinBtn className="items-end border-[#6f8faf] bg-gradient-to-b from-[#d4e2f0] to-[#a6bed6] pb-[2px]"><span className="h-[3px] w-[10px] border border-[#445] bg-white" /></WinBtn>
              <WinBtn className="border-[#6f8faf] bg-gradient-to-b from-[#d4e2f0] to-[#a6bed6]">
                <svg width="11" height="11" viewBox="0 0 11 11" fill="none" stroke="#334"><path d="M3.500 2.500V.5h7v7h-2M.5 3.500h7v7h-7Z" /></svg>
              </WinBtn>
              <WinBtn className="border-[#a0584a] bg-gradient-to-b from-[#dd9a8e] to-[#c24a32]">
                <svg width="11" height="10" viewBox="0 0 11 10"><path d="M1 1l9 8M10 1l-9 8" stroke="#fff" strokeWidth="2.400" /></svg>
              </WinBtn>
            </div>
          </div>

          <div className="ml-[7px] mr-[9px] flex min-h-0 flex-1 flex-col">
            {/* column headers */}
            <div className="flex h-[18px] shrink-0 bg-[#efefef]">
              <Head className="w-[76px]">Accession</Head>
              <Head className="w-[74px]">OK</Head>
              <Head className="w-[300px]">Description</Head>
              <Head className="w-[75px]">Score</Head>
              <Head className="w-[75px]">Unique</Head>
              <Head className="w-[151px] tracking-[-0.2px]">Goiaba_HDMSE_5F:Eucalipt...</Head>
            </div>
            <div className="flex h-[789px] shrink-0 border-b border-[#8c8c8c] bg-white">
              <div className="w-[751px] shrink-0 overflow-hidden border-l border-[#8c8c8c]">
                {ROWS.map((r, i) => {
                  const sel = r[6] === "s";
                  const named = r[5].includes("HDMSE");
                  return (
                    <div key={i} className={`flex h-[16px] border-b border-[#8c8c8c] ${sel ? "bg-[#3d9bfd] text-white" : ""}`}>
                      <Cell className="w-[75px] pl-[1px] tracking-[-0.4px]">{r[0]}</Cell>
                      <Cell className="w-[74px] justify-center !pt-0">
                        <span className={`flex h-full w-[19px] items-center justify-center ${sel ? "bg-white" : ""}`}><StatusDot kind={r[1]} /></span>
                      </Cell>
                      <Cell className="w-[300px] pl-[1px] text-[11px] tracking-[-0.17px]">{r[2]}</Cell>
                      <Cell className="w-[75px] justify-end pr-[1px]">{r[3]}</Cell>
                      <Cell className="w-[75px] justify-center tracking-[-0.2px]">{r[4]}</Cell>
                      <Cell className={`w-[151px] justify-end pr-[1px] ${named ? "tracking-[-0.4px]" : ""} ${RATIO_COLOR[r[6]]}`}>{r[5]}</Cell>
                    </div>
                  );
                })}
              </div>
              {/* vertical scrollbar */}
              <div className="ml-auto flex w-[15px] shrink-0 flex-col items-center bg-[#f4f4f4] py-[8px]">
                <svg width="7" height="4" viewBox="0 0 7 4"><path d="M3.500 0 7 4H0Z" fill="#555" /></svg>
                <div className="mt-[6px] flex h-[52px] w-[15px] items-center justify-center rounded-[2px] border border-[#a8a8a8] bg-gradient-to-r from-[#f6f6f6] to-[#dedede]">
                  <div className="flex w-[7px] flex-col gap-[1px]"><span className="h-px bg-[#666]" /><span className="h-px bg-[#666]" /><span className="h-px bg-[#666]" /></div>
                </div>
                <svg width="7" height="4" viewBox="0 0 7 4" className="mt-auto"><path d="M0 0h7L3.500 4Z" fill="#555" /></svg>
              </div>
            </div>
            {/* bottom tool strip */}
            <div className="flex min-h-0 flex-1 items-center bg-gradient-to-r from-[#c6c6c6] via-[#ececec] via-70% to-white pl-[7px]">
              <div className="flex items-center gap-[4px]">
                <TbBtn><path d="M12.500 3v5" stroke="#2a86d8" strokeWidth="2.500" /><path d="M9 7h7l-3.500 4Z" fill="#2a86d8" stroke="none" /><path d="M3 11l6 6v6M22 11l-6 6v6" strokeWidth="1.400" /></TbBtn>
                <TbBtn><path d="M1 24 24 1" strokeWidth="1.200" /><path d="M3 8l3 3 5-7" stroke="#2a86d8" strokeWidth="2" /><path d="M15 16l7 7M22 16l-7 7" stroke="#2a86d8" strokeWidth="2" /></TbBtn>
                <TbBtn><path d="M3 3h6M3 3v6M3 3l6 6" stroke="#2a86d8" strokeWidth="2" /><path d="M3 12h20v10H3ZM3 15h20M9 12v10M16 12v10" stroke="#444" /></TbBtn>
              </div>
              <Sep />
              <div className="flex items-center gap-[4px]">
                <TbBtn><path d="M3 2v20h20M3 22 23 3" strokeWidth="1.200" /><path d="M8 8h2M15 6h2M19 12h2M12 15h2" stroke="#e85a9a" strokeWidth="2" /><path d="M6 14h2M14 10h2M16 18h2" stroke="#3aa0e8" strokeWidth="2" /></TbBtn>
                <TbBtn dim><path d="M3 2v20h20" stroke="#777" /><path d="M4 20 9 9l3 6 5-9 2 4 4-4M4 22 10 13l3 5 5-8 5 1" stroke="#808080" /></TbBtn>
                <TbBtn><circle cx="5" cy="4" r="3" fill="#1e66e6" stroke="none" /><circle cx="12.500" cy="4" r="3" fill="#1e66e6" stroke="none" /><circle cx="20" cy="4" r="3" fill="#1e66e6" stroke="none" /><path d="M5 11v8h4M20 11v8h-4M12.500 8v3" /><text x="12.500" y="22" textAnchor="middle" fontSize="11" fontWeight="700" fill="#111" stroke="none" fontFamily="Liberation Sans, sans-serif">?</text></TbBtn>
              </div>
              <Sep />
              <TbBtn><path d="M7 3h12l2 7H5Z" fill="#d8d8d8" stroke="#333" /><path d="M8 6h10M8 8h10" stroke="#666" strokeDasharray="1 1" /><rect x="3" y="10" width="20" height="12" fill="#1f86d8" stroke="#111" /><rect x="5" y="14" width="3" height="2" fill="#d82050" stroke="none" /></TbBtn>
              <Sep />
              <div className="relative flex h-[16px] w-[65px] shrink-0 items-center overflow-hidden border border-black bg-white pl-[3px] text-[10px] font-bold italic">
                OK Filter
                <span className="absolute bottom-0 right-0 top-0 w-[17px] rounded-l-full bg-gradient-to-r from-[#f4f4f4] to-[#a8a8a8]" />
              </div>
              <Sep />
            </div>
          </div>
          <div className="h-[1px] shrink-0 bg-[#36b0dc]" />
        </div>
      </div>

      {/* status bar */}
      <div className="flex h-[25px] shrink-0 items-center pl-[4px] pt-px text-[11.5px]">
        Done
        <svg width="16" height="16" viewBox="0 0 16 16" className="ml-auto mr-[3px]">
          <circle cx="8" cy="8" r="5.500" fill="none" stroke="#222" strokeWidth="3.500" strokeDasharray="2.200 1" />
          <circle cx="8" cy="8" r="3" fill="#6a6a8a" />
        </svg>
        <div className="mr-[2px] flex h-[22px] w-[144px] items-center justify-center border border-l-2 border-[#b8b8b8] border-l-[#3d9bfd] bg-[#c6c6c6] text-[#3d8fe8] shadow-[inset_0_0_2px_#fff]">No jobs</div>
      </div>
    </div>
  );
};

export default App;
